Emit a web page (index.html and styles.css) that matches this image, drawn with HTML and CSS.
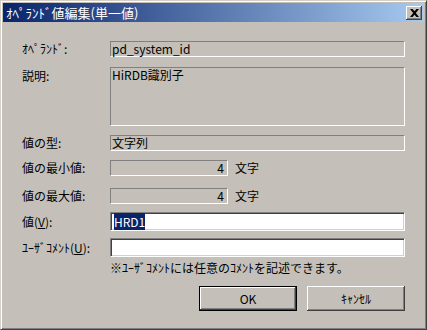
FILE: index.html
```html
<!DOCTYPE html>
<html lang="ja">
<head>
    <meta charset="UTF-8">
    <title>ｵﾍﾟﾗﾝﾄﾞ値編集(単一値)</title>
    <link rel="stylesheet" href="styles.css">
</head>
<body>
    <div class="window">
        <!-- Title bar -->
        <div class="titlebar">
            <span class="title">ｵﾍﾟﾗﾝﾄﾞ値編集(単一値)</span>
            <button class="close" type="button">
                <svg width="9" height="8" viewBox="0 0 9 8">
                    <path d="M0 0h2.5l2 2.2l2-2.2h2.5l-3.2 4l3.2 4h-2.5l-2-2.2l-2 2.2h-2.5l3.2-4z" fill="#000"/>
                </svg>
            </button>
        </div>

        <!-- Dialog body -->
        <div class="content">
            <div class="row r-operand">
                <span class="label">ｵﾍﾟﾗﾝﾄﾞ:</span>
                <div class="static wide">pd_system_id</div>
            </div>
            <div class="row r-desc">
                <span class="label">説明:</span>
                <div class="static wide tall">HiRDB識別子</div>
            </div>
            <div class="row r-type">
                <span class="label">値の型:</span>
                <div class="static wide">文字列</div>
            </div>
            <div class="row r-min">
                <span class="label">値の最小値:</span>
                <div class="static short">4</div>
                <span class="unit">文字</span>
            </div>
            <div class="row r-max">
                <span class="label">値の最大値:</span>
                <div class="static short">4</div>
                <span class="unit">文字</span>
            </div>
            <div class="row r-value">
                <span class="label">値(<u>V</u>):</span>
                <div class="edit"><span class="selected">HRD1</span></div>
            </div>
            <div class="row r-comment">
                <span class="label">ﾕｰｻﾞｺﾒﾝﾄ(<u>U</u>):</span>
                <div class="edit"></div>
            </div>
            <p class="note">※ﾕｰｻﾞｺﾒﾝﾄには任意のｺﾒﾝﾄを記述できます。</p>

            <div class="buttons">
                <button class="btn default" type="button">OK</button>
                <button class="btn" type="button">ｷｬﾝｾﾙ</button>
            </div>
        </div>
    </div>
</body>
</html>
```

FILE: styles.css
```css
/* Page */
body {
    margin: 0;
    background-color: #c4c0b9;
    font-family: "Noto Sans CJK JP", "Noto Sans", sans-serif;
    font-size: 12px;
    color: #000;
}

/* Classic dialog window frame */
.window {
    width: 427px;
    height: 330px;
    box-sizing: border-box;
    padding: 2px;
    border-top: 1px solid #d4d0c8;
    border-left: 1px solid #d4d0c8;
    border-right: 1px solid #404040;
    border-bottom: 1px solid #404040;
    box-shadow: inset 1px 1px #fff, inset -1px -1px #808080;
    background-color: #c4c0b9;
}

/* Title bar with gradient */
.titlebar {
    height: 19px;
    display: flex;
    align-items: center;
    justify-content: space-between;
    padding: 0 2px 0 3px;
    background: linear-gradient(to right, #0a246a, #a6caf0);
    color: #fff;
}

.title {
    font-size: 13px;
    line-height: 19px;
}

.close {
    width: 16px;
    height: 14px;
    padding: 0;
    display: flex;
    align-items: center;
    justify-content: center;
    background-color: #c4c0b9;
    border: none;
    box-shadow: inset -1px -1px #404040, inset 1px 1px #fff, inset -2px -2px #808080;
}

/* Dialog contents */
.content {
    padding: 18px 0 0 19px;
}

.row {
    display: flex;
    align-items: center;
}

.label {
    width: 88px;
    flex-shrink: 0;
}

u {
    text-decoration-thickness: 1px;
    text-underline-offset: 1px;
}

/* Read-only sunken text */
.static {
    box-sizing: border-box;
    height: 16px;
    line-height: 14px;
    padding-left: 1px;
    border-top: 1px solid #808080;
    border-left: 1px solid #808080;
    border-right: 1px solid #fff;
    border-bottom: 1px solid #fff;
}

.wide {
    width: 295px;
}

.tall {
    height: 59px;
}

.short {
    width: 118px;
    text-align: right;
    padding-right: 3px;
}

.unit {
    margin-left: 7px;
}

/* Editable fields */
.edit {
    box-sizing: border-box;
    width: 295px;
    height: 19px;
    padding: 2px 0 0 3px;
    line-height: 13px;
    background-color: #fff;
    border-top: 1px solid #808080;
    border-left: 1px solid #808080;
    border-right: 1px solid #fff;
    border-bottom: 1px solid #fff;
    box-shadow: inset 1px 1px #404040, inset -1px -1px #d4d0c8;
}

.selected {
    background-color: #0a246a;
    color: #fff;
}

/* Row spacing */
.r-desc { margin-top: 10px; align-items: flex-start; }
.r-type { margin-top: 8px; }
.r-min { margin-top: 8px; }
.r-max { margin-top: 11px; }
.r-value { margin-top: 8px; }
.r-comment { margin-top: 7px; }

.note {
    margin: 4px 0 0 88px;
    line-height: 14px;
}

/* Buttons */
.buttons {
    display: flex;
    gap: 10px;
    margin: 11px 0 0 177px;
}

.btn {
    width: 98px;
    height: 25px;
    padding: 0;
    font-family: inherit;
    font-size: 12px;
    background-color: #c4c0b9;
    border: none;
    box-shadow: inset -1px -1px #404040, inset 1px 1px #fff, inset -2px -2px #808080;
}

.btn.default {
    border: 1px solid #000;
}
```
